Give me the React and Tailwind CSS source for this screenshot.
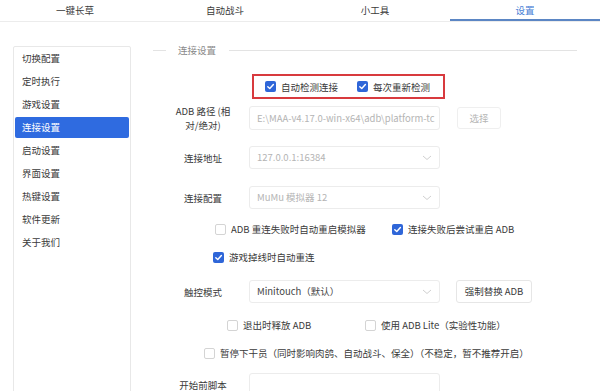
import React from "react";

const FONT = { fontFamily: '"Noto Sans CJK SC", "Noto Sans", sans-serif' };

function Check({ checked }) {
  if (checked) {
    return (
      <span className="flex h-[11px] w-[11px] shrink-0 items-center justify-center rounded-[2px] bg-[#2f66d8]">
        <svg width="9" height="9" viewBox="0 0 10 10">
          <path d="M2 5.2 L4.2 7.3 L8.2 2.8" fill="none" stroke="white" strokeWidth="1.6" strokeLinecap="round" strokeLinejoin="round" />
        </svg>
      </span>
    );
  }
  return <span className="h-[11px] w-[11px] shrink-0 rounded-[2px] border border-[#d4d4d4] bg-white" />;
}

function CB({ checked, children, className = "" }) {
  return (
    <div className={`flex items-center gap-[5px] text-[9.5px] leading-[14px] text-[#3a3a3a] whitespace-nowrap ${className}`}>
      <Check checked={checked} />
      <span>{children}</span>
    </div>
  );
}

function Chevron() {
  return (
    <svg width="10" height="6" viewBox="0 0 10 6" className="shrink-0">
      <path d="M1 1 L5 4.5 L9 1" fill="none" stroke="#d0d0d0" strokeWidth="1" />
    </svg>
  );
}

function Label({ children }) {
  return <div className="w-[90px] ml-[18px] text-center text-[9.5px] leading-[14px] text-[#3a3a3a]">{children}</div>;
}

export default function App() {
  const tabs = ["一键长草", "自动战斗", "小工具", "设置"];
  const nav = ["切换配置", "定时执行", "游戏设置", "连接设置", "启动设置", "界面设置", "热键设置", "软件更新", "关于我们"];
  return (
    <div className="w-[600px] h-[391px] overflow-hidden bg-white" style={FONT}>
      {/* tabs */}
      <div className="flex h-[22px] border-b border-[#ececec]">
        {tabs.map((t, i) => (
          <div
            key={t}
            className={`flex-1 text-center text-[9.5px] leading-[21px] ${i === 3 ? "text-[#4a7fd6] border-b-2 border-[#5b86c4]" : "text-[#3a3a3a]"}`}
          >
            {t}
          </div>
        ))}
      </div>

      <div className="flex">
        {/* left nav */}
        <div className="ml-[13px] mt-[24px] w-[118px] h-[400px] shrink-0 rounded-[2px] border border-[#e8e8e8]">
          {nav.map((n) =>
            n === "连接设置" ? (
              <div key={n} className="h-[23px] py-[1px] px-[1px]">
                <div className="h-[21px] rounded-[2px] bg-[#2f6be0] px-[7px] text-[9.5px] leading-[21px] text-white">{n}</div>
              </div>
            ) : (
              <div key={n} className="h-[23px] px-[8px] text-[9.5px] leading-[23px] text-[#3a3a3a]">{n}</div>
            )
          )}
        </div>

        {/* content */}
        <div className="ml-[9px] flex flex-col">
          {/* heading */}
          <div className="mt-[21px] flex h-[14px] items-center">
            <div className="ml-[13px] h-px w-[13px] bg-[#e3e3e3]" />
            <div className="ml-[12px] text-[9.5px] text-[#8a8a8a] leading-[14px]">连接设置</div>
            <div className="ml-[13px] h-px w-[348px] bg-[#e3e3e3]" />
          </div>

          {/* red box */}
          <div className="mt-[17px] ml-[112px] flex h-[25px] w-[193px] items-center border-2 border-[#d83a3e]">
            <CB checked className="ml-[11px]">自动检测连接</CB>
            <CB checked className="ml-[19px]">每次重新检测</CB>
          </div>

          {/* ADB path */}
          <div className="mt-[5px] flex h-[28px] items-center">
            <Label>
              ADB 路径 (相
              <br />
              对/绝对)
            </Label>
            <div className="ml-[1px] flex h-[24px] w-[191px] items-center overflow-hidden whitespace-nowrap rounded-[3px] border border-[#ececec] px-[7px] text-[9.5px] text-[#b4b4b4]">
              E:\MAA-v4.17.0-win-x64\adb\platform-tc
            </div>
            <div className="ml-[17px] flex h-[22px] w-[44px] items-center justify-center rounded-[3px] border border-[#efefef] text-[9.5px] text-[#b5b5b5]">
              选择
            </div>
          </div>

          {/* address */}
          <div className="mt-[14px] flex h-[23px] items-center">
            <Label>连接地址</Label>
            <div className="ml-[1px] flex h-[23px] w-[191px] items-center justify-between rounded-[3px] border border-[#ececec] pl-[7px] pr-[7px] text-[9.5px] text-[#b4b4b4]">
              <span>127.0.0.1:16384</span>
              <Chevron />
            </div>
          </div>

          {/* config */}
          <div className="mt-[17px] flex h-[23px] items-center">
            <Label>连接配置</Label>
            <div className="ml-[1px] flex h-[23px] w-[191px] items-center justify-between rounded-[3px] border border-[#ececec] pl-[7px] pr-[7px] text-[9.5px] text-[#b4b4b4]">
              <span>MuMu 模拟器 12</span>
              <Chevron />
            </div>
          </div>

          {/* checkbox row */}
          <div className="mt-[13px] flex h-[14px] items-center">
            <div className="ml-[75px] w-[177px]">
              <CB checked={false}>ADB 重连失败时自动重启模拟器</CB>
            </div>
            <CB checked>连接失败后尝试重启 ADB</CB>
          </div>

          <div className="mt-[14px] flex h-[14px] items-center">
            <CB checked className="ml-[73px]">游戏掉线时自动重连</CB>
          </div>

          {/* touch mode */}
          <div className="mt-[16px] flex h-[23px] items-center">
            <Label>触控模式</Label>
            <div className="ml-[1px] flex h-[23px] w-[191px] items-center justify-between rounded-[3px] border border-[#ececec] pl-[7px] pr-[7px] text-[9.5px] text-[#444]">
              <span>Minitouch（默认）</span>
              <Chevron />
            </div>
            <div className="ml-[16px] flex h-[23px] w-[76px] items-center justify-center rounded-[3px] border border-[#e6e6e6] text-[9.5px] text-[#3a3a3a]">
              强制替换 ADB
            </div>
          </div>

          <div className="mt-[15px] flex h-[14px] items-center">
            <div className="ml-[87px] w-[138px]">
              <CB checked={false}>退出时释放 ADB</CB>
            </div>
            <CB checked={false}>使用 ADB Lite（实验性功能）</CB>
          </div>

          <div className="mt-[14px] flex h-[14px] items-center">
            <CB checked={false} className="ml-[64px]">
              暂停下干员（同时影响肉鸽、自动战斗、保全）（不稳定，暂不推荐开启）
            </CB>
          </div>

          {/* pre script */}
          <div className="mt-[13px] flex h-[24px] items-center">
            <Label>开始前脚本</Label>
            <div className="ml-[1px] h-[24px] w-[191px] rounded-[3px] border border-[#ececec]" />
          </div>
        </div>
      </div>
    </div>
  );
}
